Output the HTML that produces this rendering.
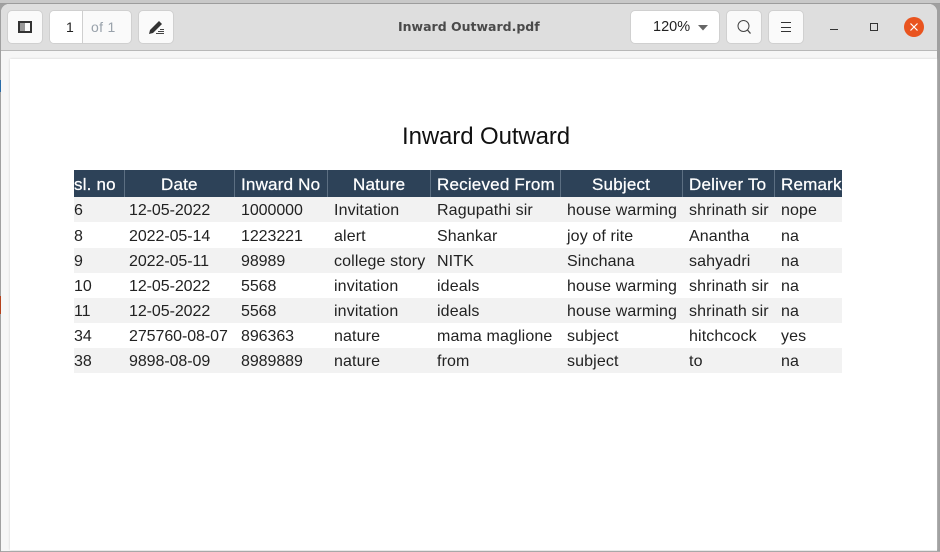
<!DOCTYPE html>
<html><head><meta charset="utf-8"><style>
html,body{margin:0;padding:0}
body{width:940px;height:552px;overflow:hidden;position:relative;background:#a0a0a0;font-family:"Liberation Sans",sans-serif}
div,span{position:absolute;box-sizing:border-box}
.win{left:1px;top:4px;width:936px;height:548px;background:#f6f6f6;border-radius:8px 8px 0 0;overflow:hidden}
.btn{top:10px;height:34px;background:#fafafa;border:1px solid #d0d0d0;border-radius:5px}
.sheet{left:10px;top:59px;width:927px;height:491px;background:#fff;box-shadow:0 0 2px #ccc}
.t{white-space:nowrap;font-size:16px;line-height:20px;color:#222;letter-spacing:.12px}
.d{letter-spacing:-.07px}
.h{white-space:nowrap;font-size:17px;line-height:20px;color:#fff;letter-spacing:.2px;top:175px;-webkit-text-stroke:.25px #fff}
.r{left:74px;width:768px;height:25px}
.s{top:170px;width:1px;height:27px;background:#5c6f82}
</style></head><body>
<div style="left:0;top:0;width:940px;height:3px;background:#c8c8c8"></div>
<div style="left:0;top:3px;width:940px;height:1px;background:#9c9c9c"></div>
<div style="left:0;top:80px;width:1px;height:12px;background:#2a6ca8"></div>
<div style="left:0;top:296px;width:1px;height:18px;background:#b5421c"></div>
<div class="win"></div>
<div style="left:1px;top:4px;width:936px;height:47px;background:#dedede;border-bottom:1px solid #b8b8b8;border-radius:8px 8px 0 0"></div>
<div class="sheet"></div>
<div style="left:1px;top:551px;width:939px;height:1px;background:#a8a8a8"></div>

<div class="btn" style="left:7px;width:36px"></div>
<svg style="position:absolute;left:18px;top:21px" width="14" height="12"><rect x="1" y="1" width="12" height="10" fill="#fafafa" stroke="#333" stroke-width="2"/><rect x="2" y="2" width="5" height="8" fill="#999"/></svg>
<div class="btn" style="left:49px;width:83px"></div>
<div style="left:50px;top:11px;width:33px;height:32px;background:#fff;border-right:1px solid #cfcfcf;border-radius:4px 0 0 4px"></div>
<span style="left:66px;top:18px;font-size:14px;line-height:18px;color:#222">1</span>
<span style="left:91px;top:18px;font-size:14px;line-height:18px;color:#99a2ab;letter-spacing:.3px">of 1</span>
<div class="btn" style="left:138px;width:36px"></div>
<svg style="position:absolute;left:148px;top:19px" width="17" height="16"><path d="M1 15 L2 11 L11 2 L14 5 L5 14 Z" fill="#333"/><path d="M8 14.500H16M10 12.500H16M12 10.500H16" stroke="#444" stroke-width="1"/></svg>

<span style="left:398px;top:18px;line-height:18px;font-weight:bold;color:#4a4a4a;font-family:'DejaVu Sans',sans-serif;font-size:12.5px">Inward Outward.pdf</span>

<div class="btn" style="left:630px;width:90px;background:#fff"></div>
<span style="left:653px;top:18px;font-size:14.5px;line-height:18px;color:#222">120%</span>
<svg style="position:absolute;left:698px;top:25px" width="10" height="6"><path d="M0 0H10L5 5.500Z" fill="#666"/></svg>
<div class="btn" style="left:726px;width:36px"></div>
<svg style="position:absolute;left:736px;top:19px" width="16" height="16" fill="none" stroke="#444"><circle cx="7.500" cy="7" r="5.500" stroke-width="1"/><path d="M11.500 11L14.500 14.500" stroke-width="1.300"/></svg>
<div class="btn" style="left:768px;width:36px"></div>
<svg style="position:absolute;left:780px;top:21px" width="12" height="12" stroke="#333"><path d="M1 1.500H11M1 6.500H11M1 10.500H11"/></svg>
<div style="left:830px;top:29px;width:8px;height:1px;background:#333"></div>
<div style="left:870px;top:23px;width:8px;height:8px;border:1px solid #333"></div>
<div style="left:904px;top:17px;width:20px;height:20px;border-radius:50%;background:#e9541f"></div>
<svg style="position:absolute;left:904px;top:17px" width="20" height="20" stroke="#fff" stroke-width="1.200"><path d="M6.500 6.500L13.500 13.500M13.500 6.500L6.500 13.500"/></svg>

<span style="left:402px;top:122px;font-size:24px;line-height:30px;color:#111;letter-spacing:-.1px">Inward Outward</span>

<div style="left:74px;top:170px;width:768px;height:27px;background:#2d4258"></div>
<div class="s" style="left:124px"></div><div class="s" style="left:234px"></div><div class="s" style="left:327px"></div><div class="s" style="left:430px"></div><div class="s" style="left:560px"></div><div class="s" style="left:682px"></div><div class="s" style="left:774px"></div>
<div class="r" style="top:197px;background:#f2f2f2"></div>
<div class="r" style="top:248px;background:#f2f2f2"></div>
<div class="r" style="top:298px;background:#f2f2f2"></div>
<div class="r" style="top:348px;background:#f2f2f2"></div>

<span class="h" style="left:74px">sl. no</span>
<span class="h" style="left:161px">Date</span>
<span class="h" style="left:241px">Inward No</span>
<span class="h" style="left:353px">Nature</span>
<span class="h" style="left:437px">Recieved From</span>
<span class="h" style="left:592px">Subject</span>
<span class="h" style="left:689px">Deliver To</span>
<div style="left:775px;top:170px;width:67px;height:27px;overflow:hidden"><span class="h" style="left:6px;top:5px">Remarks</span></div>

<span class="t d" style="left:74px;top:201px">6</span><span class="t d" style="left:129px;top:201px">12-05-2022</span><span class="t d" style="left:241px;top:201px">1000000</span><span class="t" style="left:334px;top:201px">Invitation</span><span class="t" style="left:437px;top:201px">Ragupathi sir</span><span class="t" style="left:567px;top:201px">house warming</span><span class="t" style="left:689px;top:201px">shrinath sir</span><span class="t" style="left:781px;top:201px">nope</span>
<span class="t d" style="left:74px;top:227px">8</span><span class="t d" style="left:129px;top:227px">2022-05-14</span><span class="t d" style="left:241px;top:227px">1223221</span><span class="t" style="left:334px;top:227px">alert</span><span class="t" style="left:437px;top:227px">Shankar</span><span class="t" style="left:567px;top:227px">joy of rite</span><span class="t" style="left:689px;top:227px">Anantha</span><span class="t" style="left:781px;top:227px">na</span>
<span class="t d" style="left:74px;top:252px">9</span><span class="t d" style="left:129px;top:252px">2022-05-11</span><span class="t d" style="left:241px;top:252px">98989</span><span class="t" style="left:334px;top:252px">college story</span><span class="t" style="left:437px;top:252px">NITK</span><span class="t" style="left:567px;top:252px">Sinchana</span><span class="t" style="left:689px;top:252px">sahyadri</span><span class="t" style="left:781px;top:252px">na</span>
<span class="t d" style="left:74px;top:277px">10</span><span class="t d" style="left:129px;top:277px">12-05-2022</span><span class="t d" style="left:241px;top:277px">5568</span><span class="t" style="left:334px;top:277px">invitation</span><span class="t" style="left:437px;top:277px">ideals</span><span class="t" style="left:567px;top:277px">house warming</span><span class="t" style="left:689px;top:277px">shrinath sir</span><span class="t" style="left:781px;top:277px">na</span>
<span class="t d" style="left:74px;top:302px">11</span><span class="t d" style="left:129px;top:302px">12-05-2022</span><span class="t d" style="left:241px;top:302px">5568</span><span class="t" style="left:334px;top:302px">invitation</span><span class="t" style="left:437px;top:302px">ideals</span><span class="t" style="left:567px;top:302px">house warming</span><span class="t" style="left:689px;top:302px">shrinath sir</span><span class="t" style="left:781px;top:302px">na</span>
<span class="t d" style="left:74px;top:327px">34</span><span class="t d" style="left:129px;top:327px">275760-08-07</span><span class="t d" style="left:241px;top:327px">896363</span><span class="t" style="left:334px;top:327px">nature</span><span class="t" style="left:437px;top:327px">mama maglione</span><span class="t" style="left:567px;top:327px">subject</span><span class="t" style="left:689px;top:327px">hitchcock</span><span class="t" style="left:781px;top:327px">yes</span>
<span class="t d" style="left:74px;top:352px">38</span><span class="t d" style="left:129px;top:352px">9898-08-09</span><span class="t d" style="left:241px;top:352px">8989889</span><span class="t" style="left:334px;top:352px">nature</span><span class="t" style="left:437px;top:352px">from</span><span class="t" style="left:567px;top:352px">subject</span><span class="t" style="left:689px;top:352px">to</span><span class="t" style="left:781px;top:352px">na</span>
</body></html>
